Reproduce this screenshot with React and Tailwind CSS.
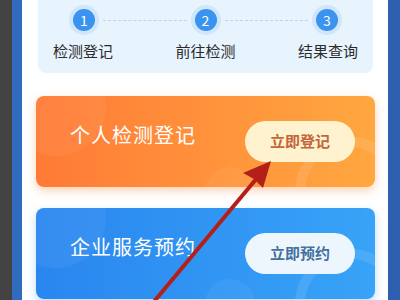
import React from 'react';

const font = { fontFamily: '"Noto Sans CJK SC", "Noto Sans", sans-serif' };

const Step = ({ n }) => (
    <div className="w-[30px] h-[30px] rounded-full bg-[#cfe6fb] flex items-center justify-center shrink-0">
        <div className="w-[22px] h-[22px] rounded-full bg-[#3a93ef] text-white text-[14px] leading-none flex items-center justify-center">
            {n}
        </div>
    </div>
);

const Dash = () => (
    <div className="flex-1 mx-[4px] border-t border-dashed border-[#b9d4ee]" />
);

// Action card with title and pill button
const ActionCard = ({ title, action, tone }) => {
    const orange = tone === 'orange';
    return (
        <div
            className={`relative h-[91px] rounded-[8px] overflow-hidden flex items-center justify-between pl-[34px] pr-[20px] ${
                orange
                    ? 'bg-gradient-to-r from-[#ff7a36] to-[#ffa740] shadow-[0_4px_10px_rgba(255,130,50,0.35)]'
                    : 'bg-gradient-to-r from-[#2a86ef] to-[#38a3f7] shadow-[0_4px_10px_rgba(40,140,240,0.3)]'
            }`}
        >
            <div className="absolute -left-[30px] -top-[40px] w-[100px] h-[100px] rounded-full bg-white/5" />
            <div className="absolute -right-[30px] -bottom-[60px] w-[110px] h-[110px] rounded-full border-[10px] border-white/10" />
            <div className="absolute right-[120px] -bottom-[30px] w-[50px] h-[50px] rounded-full bg-white/5" />
            <span className="relative text-white text-[20px] leading-none pb-[13px] tracking-[1px]">{title}</span>
            <button
                className={`relative w-[110px] h-[41px] rounded-full text-[15px] font-semibold ${
                    orange ? 'bg-[#fff3cf] text-[#c4653a]' : 'bg-[#eef6fd] text-[#44709f]'
                }`}
            >
                {action}
            </button>
        </div>
    );
};

const App = () => {
    return (
        <div className="relative w-[400px] h-[300px] overflow-hidden flex bg-white" style={font}>
            <div className="w-[12px] bg-[#434343] shrink-0" />
            <div className="w-[10px] bg-[#2f6cbe] shrink-0" />

            <div className="flex-1 flex flex-col pl-[14px] pr-[13px]">
                {/* Progress steps panel */}
                <div className="mx-[2px] h-[73px] rounded-b-[8px] bg-[#e7f3fd] pt-[5px]">
                    <div className="flex items-center px-[31px]">
                        <Step n="1" />
                        <Dash />
                        <Step n="2" />
                        <Dash />
                        <Step n="3" />
                    </div>
                    <div className="flex justify-between px-[15px] mt-[6px] text-[15px] leading-[20px] text-[#2b2b2b]">
                        <span>检测登记</span>
                        <span>前往检测</span>
                        <span>结果查询</span>
                    </div>
                </div>

                <div className="mt-[23px]">
                    <ActionCard title="个人检测登记" action="立即登记" tone="orange" />
                </div>
                <div className="mt-[21px]">
                    <ActionCard title="企业服务预约" action="立即预约" tone="blue" />
                </div>
            </div>

            <div className="w-[12px] bg-[#2f5fb0] shrink-0" />

            {/* Red annotation arrow */}
            <svg className="absolute inset-0 pointer-events-none" width="400" height="300" viewBox="0 0 400 300">
                <line x1="152" y1="304" x2="257" y2="178" stroke="#b3201a" strokeWidth="4" />
                <polygon points="271,161 243,173 254,179 263,188" fill="#b3201a" />
            </svg>
        </div>
    );
};

export default App;
